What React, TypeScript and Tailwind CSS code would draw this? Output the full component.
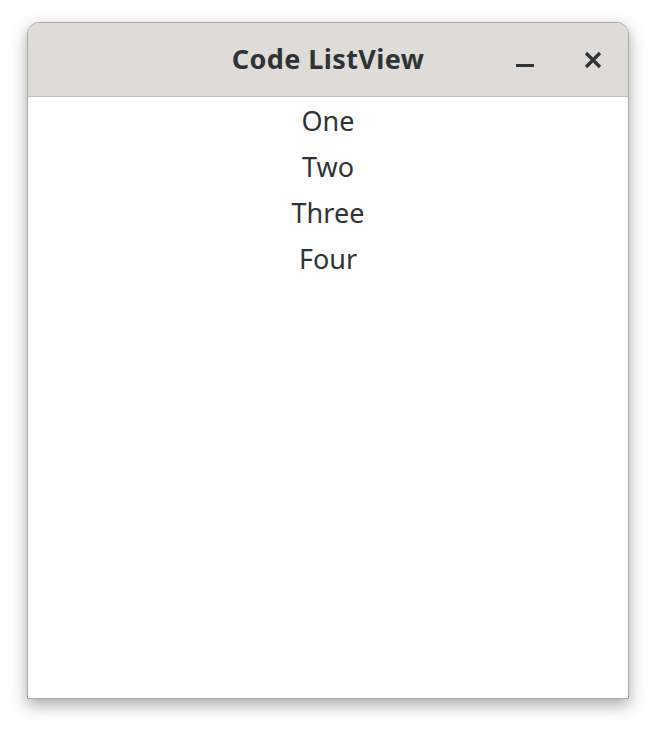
import React from 'react';

const items = ['One', 'Two', 'Three', 'Four'];

export default function App() {
  return (
    <div className="w-[656px] h-[732px] bg-white pt-[22px] pl-[27px]" style={{ fontFamily: '"Noto Sans", "Open Sans", sans-serif' }}>
      <div className="w-[602px] h-[677px] flex flex-col rounded-t-[12px] border border-[#a9a7a4] bg-white shadow-[0_6px_16px_rgba(0,0,0,0.35)] overflow-hidden">
        {/* Header bar */}
        <div className="relative h-[74px] shrink-0 flex items-center justify-center bg-[#dfdcd8] border-b border-[#c4c1bc]">
          <span className="text-[27px] font-bold text-[#2e3436] tracking-[0.4px]">Code ListView</span>
          <div className="absolute right-[26px] top-0 h-full flex items-center gap-[50px]">
            <div className="w-[18px] h-[3px] mt-[12px] bg-[#2e3436]" />
            <svg width="18" height="18" viewBox="0 0 18 18" className="text-[#2e3436]">
              <path d="M2 2 L16 16 M16 2 L2 16" stroke="currentColor" strokeWidth="3.2" />
            </svg>
          </div>
        </div>
        {/* List */}
        <div className="flex-1 flex flex-col items-center pt-[1px]">
          {items.map((item) => (
            <div key={item} className="h-[46px] flex items-center text-[27px] text-[#2e3436]">
              {item}
            </div>
          ))}
        </div>
      </div>
    </div>
  );
}
